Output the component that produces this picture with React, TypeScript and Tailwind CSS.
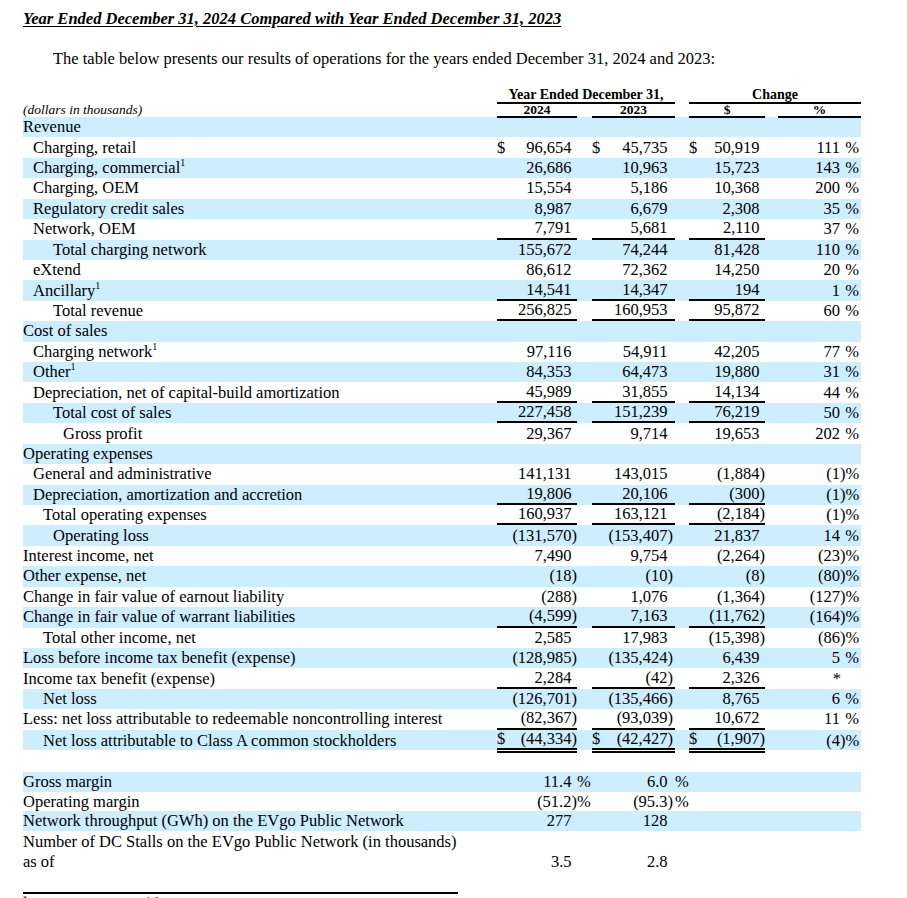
import React from "react";

type Row = {
  label: React.ReactNode;
  indent: number;
  vals?: [string, string, string, string];
  dollar?: boolean;
  ul?: "single" | "double";
};

const S = () => <sup className="text-[10px]">1</sup>;

const rows: Row[] = [
  { label: "Revenue", indent: 0 },
  { label: "Charging, retail", indent: 1, vals: ["96,654", "45,735", "50,919", "111 %"], dollar: true },
  { label: <>Charging, commercial<S /></>, indent: 1, vals: ["26,686", "10,963", "15,723", "143 %"] },
  { label: "Charging, OEM", indent: 1, vals: ["15,554", "5,186", "10,368", "200 %"] },
  { label: "Regulatory credit sales", indent: 1, vals: ["8,987", "6,679", "2,308", "35 %"] },
  { label: "Network, OEM", indent: 1, vals: ["7,791", "5,681", "2,110", "37 %"], ul: "single" },
  { label: "Total charging network", indent: 3, vals: ["155,672", "74,244", "81,428", "110 %"] },
  { label: "eXtend", indent: 1, vals: ["86,612", "72,362", "14,250", "20 %"] },
  { label: <>Ancillary<S /></>, indent: 1, vals: ["14,541", "14,347", "194", "1 %"], ul: "single" },
  { label: "Total revenue", indent: 3, vals: ["256,825", "160,953", "95,872", "60 %"], ul: "single" },
  { label: "Cost of sales", indent: 0 },
  { label: <>Charging network<S /></>, indent: 1, vals: ["97,116", "54,911", "42,205", "77 %"] },
  { label: <>Other<S /></>, indent: 1, vals: ["84,353", "64,473", "19,880", "31 %"] },
  { label: "Depreciation, net of capital-build amortization", indent: 1, vals: ["45,989", "31,855", "14,134", "44 %"], ul: "single" },
  { label: "Total cost of sales", indent: 3, vals: ["227,458", "151,239", "76,219", "50 %"], ul: "single" },
  { label: "Gross profit", indent: 4, vals: ["29,367", "9,714", "19,653", "202 %"] },
  { label: "Operating expenses", indent: 0 },
  { label: "General and administrative", indent: 1, vals: ["141,131", "143,015", "(1,884)", "(1)%"] },
  { label: "Depreciation, amortization and accretion", indent: 1, vals: ["19,806", "20,106", "(300)", "(1)%"], ul: "single" },
  { label: "Total operating expenses", indent: 2, vals: ["160,937", "163,121", "(2,184)", "(1)%"], ul: "single" },
  { label: "Operating loss", indent: 3, vals: ["(131,570)", "(153,407)", "21,837", "14 %"] },
  { label: "Interest income, net", indent: 0, vals: ["7,490", "9,754", "(2,264)", "(23)%"] },
  { label: "Other expense, net", indent: 0, vals: ["(18)", "(10)", "(8)", "(80)%"] },
  { label: "Change in fair value of earnout liability", indent: 0, vals: ["(288)", "1,076", "(1,364)", "(127)%"] },
  { label: "Change in fair value of warrant liabilities", indent: 0, vals: ["(4,599)", "7,163", "(11,762)", "(164)%"], ul: "single" },
  { label: "Total other income, net", indent: 2, vals: ["2,585", "17,983", "(15,398)", "(86)%"] },
  { label: "Loss before income tax benefit (expense)", indent: 0, vals: ["(128,985)", "(135,424)", "6,439", "5 %"] },
  { label: "Income tax benefit (expense)", indent: 0, vals: ["2,284", "(42)", "2,326", "*"], ul: "single" },
  { label: "Net loss", indent: 2, vals: ["(126,701)", "(135,466)", "8,765", "6 %"] },
  { label: "Less: net loss attributable to redeemable noncontrolling interest", indent: 0, vals: ["(82,367)", "(93,039)", "10,672", "11 %"], ul: "single" },
  { label: "Net loss attributable to Class A common stockholders", indent: 2, vals: ["(44,334)", "(42,427)", "(1,907)", "(4)%"], dollar: true, ul: "double" },
];

const indentCls = ["pl-0", "pl-[10px]", "pl-[20px]", "pl-[30px]", "pl-[40px]"];
const GRID = "grid grid-cols-[474px_80px_15px_83px_14px_76px_13px_83px]";

function NumCell({
  v,
  dollar,
  ul,
  pr,
  fill = true,
}: {
  v: string;
  dollar?: boolean;
  ul?: "single" | "double";
  pr?: string;
  fill?: boolean;
}) {
  const paren = v.startsWith("(");
  const body = paren ? v.slice(0, -1) : v;
  const ulCls =
    ul === "single"
      ? "border-b-2 border-black"
      : ul === "double"
      ? "border-b-[5px] border-double border-black"
      : "";
  return (
    <div className={`flex justify-between items-center ${fill ? "h-full" : ""} ${ulCls} ${pr ?? ""}`}>
      <span>{dollar ? "$" : ""}</span>
      <span className="flex">
        <span>{body}</span>
        <span className="w-[5.5px]">{paren ? ")" : ""}</span>
      </span>
    </div>
  );
}

function PctCell({ v }: { v: string }) {
  if (v === "*") {
    return (
      <div className="flex justify-end items-center h-full pr-[2px]">
        <span>*</span>
        <span className="w-[18px]" />
      </div>
    );
  }
  const paren = v.endsWith(")%");
  const body = paren ? v.slice(0, -2) : v.replace(" %", "");
  return (
    <div className="flex justify-end items-center h-full pr-[2px]">
      <span>{body}</span>
      <span className="w-[19px] text-right">{paren ? ")%" : "%"}</span>
    </div>
  );
}

export default function App() {
  return (
    <div className="w-[907px] h-[898px] overflow-hidden bg-white text-black font-['Liberation_Serif',serif] pl-[23px]">
      <div className="pt-[10px] text-[16.5px] leading-[18px] font-bold italic underline underline-offset-2">
        Year Ended December 31, 2024 Compared with Year Ended December 31, 2023
      </div>
      <div className="mt-[22px] pl-[30px] text-[16.5px] leading-[18px]">
        The table below presents our results of operations for the years ended December 31, 2024 and 2023:
      </div>

      <div className="mt-[19px] text-[16.5px] w-[838px]">
        {/* header row A */}
        <div className={`${GRID} h-[16px] text-[14px] font-bold leading-[14px]`}>
          <div />
          <div className="col-span-3 border-b-2 border-black text-center pt-[1px]">Year Ended December 31,</div>
          <div />
          <div className="col-span-3 border-b-2 border-black text-center pt-[1px]">Change</div>
        </div>
        {/* header row B */}
        <div className={`${GRID} h-[14px] text-[13.5px] leading-[12px]`}>
          <div className="italic font-normal pt-[1px]">(dollars in thousands)</div>
          <div className="border-b-2 border-black text-center font-bold pt-[1px]">2024</div>
          <div />
          <div className="border-b-2 border-black text-center font-bold pt-[1px]">2023</div>
          <div />
          <div className="border-b-2 border-black text-center font-bold pt-[1px]">$</div>
          <div />
          <div className="border-b-2 border-black text-center font-bold pt-[1px]">%</div>
        </div>

        {rows.map((r, i) => (
          <div
            key={i}
            className={`${GRID} h-[20.43px] leading-[18px] ${i % 2 === 0 ? "bg-[#cceeff]" : ""}`}
          >
            <div className={`${indentCls[r.indent]} flex items-center whitespace-nowrap`}>{r.label}</div>
            {r.vals ? (
              <>
                <NumCell v={r.vals[0]} dollar={r.dollar} ul={r.ul} />
                <div />
                <NumCell v={r.vals[1]} dollar={r.dollar} ul={r.ul} pr="pr-[2px]" />
                <div />
                <NumCell v={r.vals[2]} dollar={r.dollar} ul={r.ul} />
                <div />
                <PctCell v={r.vals[3]} />
              </>
            ) : null}
          </div>
        ))}

        <div className="h-[22px]" />

        {/* margin rows */}
        <div className={`${GRID} h-[20px] leading-[18px] bg-[#cceeff] items-center`}>
          <div>Gross margin</div>
          <NumCell v="11.4" />
          <div>%</div>
          <NumCell v="6.0" pr="pr-[2px]" />
          <div>%</div>
          <div />
          <div />
          <div />
        </div>
        <div className={`${GRID} h-[19px] leading-[18px] items-center`}>
          <div>Operating margin</div>
          <NumCell v="(51.2)" />
          <div>%</div>
          <NumCell v="(95.3)" pr="pr-[2px]" />
          <div>%</div>
          <div />
          <div />
          <div />
        </div>
        <div className={`${GRID} h-[20px] leading-[18px] bg-[#cceeff] items-center`}>
          <div>Network throughput (GWh) on the EVgo Public Network</div>
          <NumCell v="277" />
          <div />
          <NumCell v="128" pr="pr-[2px]" />
          <div />
          <div />
          <div />
          <div />
        </div>
        <div className={`${GRID} leading-[20px] items-end pt-[1px] pb-[1px]`}>
          <div>
            Number of DC Stalls on the EVgo Public Network (in thousands)
            <br />
            as of
          </div>
          <NumCell v="3.5" fill={false} />
          <div />
          <NumCell v="2.8" pr="pr-[2px]" fill={false} />
          <div />
          <div />
          <div />
          <div />
        </div>
      </div>

      <div className="mt-[19px] w-[435px] h-[2px] bg-black" />
      <div className="mt-[1px] text-[12px] leading-[14px]">
        <sup className="text-[8px]">*</sup> Percentage not meaningful.
      </div>
    </div>
  );
}
